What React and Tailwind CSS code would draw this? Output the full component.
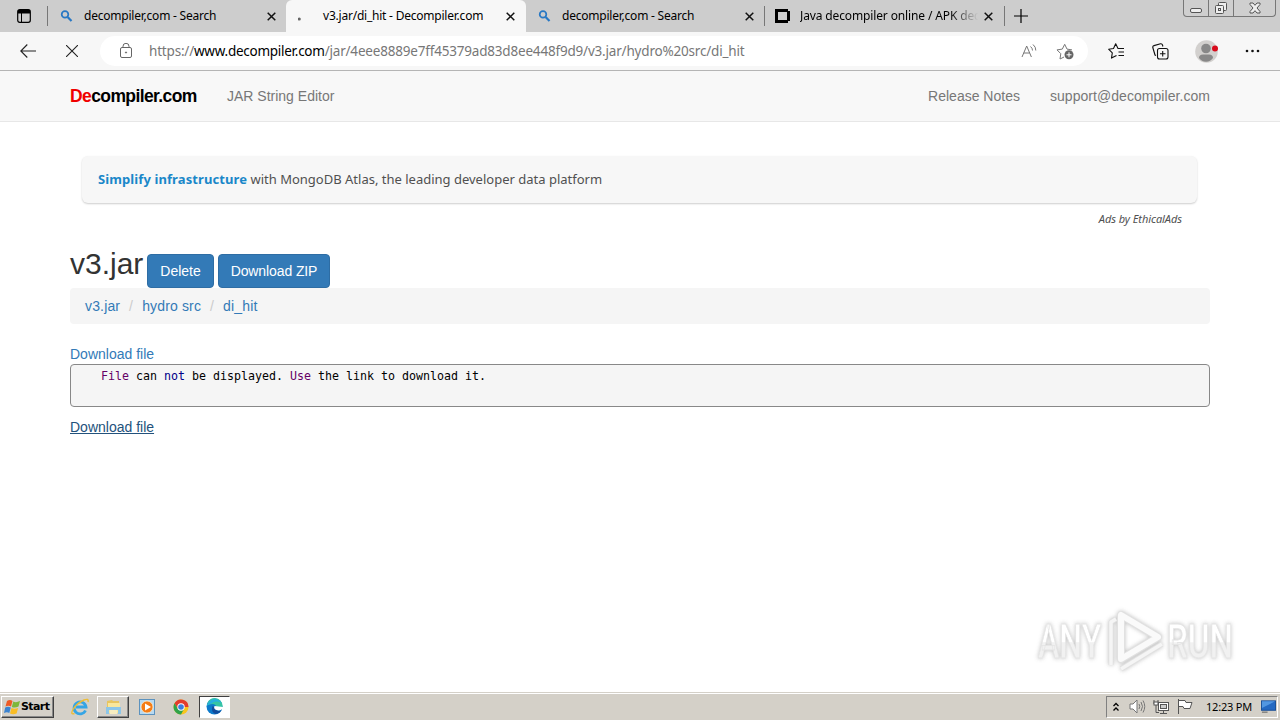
//App.jsx
import React from 'react'

const tabs = [
  { id: 1, title: 'decompiler,com - Search', icon: 'search', box: 'w-[238px] rounded-br bg-[#cdcdcd] pl-[11px] pr-[10px]' },
  { id: 2, title: 'v3.jar/di_hit - Decompiler.com', icon: 'loading', box: 'w-[240px] rounded-t-md bg-[#f7f7f7] pl-[12px] pr-[11px]' },
  { id: 3, title: 'decompiler,com - Search', icon: 'search', box: 'w-[238px] rounded-bl bg-[#cdcdcd] pl-[11px] pr-[10px]' },
  { id: 4, title: 'Java decompiler online / APK dec', icon: 'square', box: 'w-[239px] bg-[#cdcdcd] pl-[10px] pr-[11px]' },
]

function TabIcon({ name }) {
  if (name === 'search') {
    return (
      <svg className="h-4 w-4 shrink-0" viewBox="0 0 16 16" fill="none" stroke="#2878c4" strokeWidth="1.7">
        <circle cx="6" cy="6.4" r="3.300" />
        <path d="M8.600 9 L12.500 13" strokeWidth="2.200" />
      </svg>
    )
  }
  if (name === 'loading') {
    return (
      <svg className="h-4 w-4 shrink-0" viewBox="0 0 16 16">
        <circle cx="1.3" cy="11" r="1.5" fill="#666" />
      </svg>
    )
  }
  return (
    <svg className="h-4 w-4 shrink-0" viewBox="0 0 16 16">
      <path d="M0 1h13v2h2v10h-2v2H0z M3 4v8h9V4z" fill="#000" fillRule="evenodd" />
    </svg>
  )
}

function CloseIcon() {
  return (
    <svg className="h-[9px] w-[9px] shrink-0" viewBox="0 0 9 9" stroke="#111" strokeWidth="1.5">
      <path d="M.7.7l7.6 7.6M8.3.7L.7 8.3" />
    </svg>
  )
}

function TabBar() {
  return (
    <div className="relative flex h-8 bg-[#cdcdcd] font-['Noto_Sans',sans-serif]">
      <div className="flex w-[47px] items-center pl-[17px]">
        <svg className="h-[14px] w-[14px]" viewBox="0 0 14 14">
          <rect x=".7" y=".7" width="12.6" height="12.6" rx="2" fill="none" stroke="#000" strokeWidth="1.2" />
          <path d="M1 1h12v3.5H1z" fill="#000" />
          <path d="M4.5 4v9" stroke="#000" />
        </svg>
      </div>
      <div className="mt-1.5 h-5 w-px bg-[#777]"></div>
      {tabs.map((tab) => (
        <div key={tab.id} className="flex">
          <div className={'flex h-8 items-center ' + tab.box}>
            <TabIcon name={tab.icon} />
            <div className={'ml-[9px] flex-1 text-[12px] whitespace-nowrap text-black ' +
                            (tab.id === 4 ? 'tracking-[-0.13px] [mask-image:linear-gradient(to_right,#000_150px,transparent_178px)]' : 'tracking-[-0.22px]')}>
              {tab.title}
            </div>
            <CloseIcon />
          </div>
          {tab.id > 2 && <div className="mt-1.5 h-5 w-px bg-[#777]"></div>}
        </div>
      ))}
      <svg className="mt-[9px] ml-[9px] h-[14px] w-[14px]" viewBox="0 0 14 14" stroke="#000" strokeWidth="1.2">
        <path d="M7 0v14M0 7h14" />
      </svg>

      {/* window buttons */}
      <div className="absolute top-0 right-[4px] flex h-[17px] rounded-b border border-t-0 border-[#777] bg-[#cfcfcf]">
        <div className="flex w-[25px] items-end justify-center border-r border-[#777] pb-[3px]">
          <div className="h-[5px] w-[12px] rounded-[2px] border border-[#555] bg-[#eee]"></div>
        </div>
        <div className="flex w-[25px] items-center justify-center border-r border-[#777]">
          <svg className="h-[14px] w-[14px]" viewBox="0 0 14 14" fill="#eee" stroke="#555">
            <rect x="4.5" y="1.5" width="8" height="8" rx="1" />
            <rect x="1.5" y="4.5" width="8" height="8" rx="1" />
            <rect x="4.5" y="7.5" width="2" height="2" />
          </svg>
        </div>
        <div className="flex w-[41px] items-center justify-center">
          <svg className="h-[12px] w-[12px]" viewBox="0 0 12 12" fill="#eee" stroke="#555">
            <path d="M1 1h3l2 2.3L8 1h3v1.5L8 6l3 3.5V11H8L6 8.7 4 11H1V9.500L4 6 1 2.500z" />
          </svg>
        </div>
      </div>
    </div>
  )
}

function AddressBar() {
  return (
    <div className="flex h-[39px] items-center border-b border-[#b5b5b5] bg-[#f7f7f7]">
      <svg className="ml-[20px] h-[14px] w-[16px]" viewBox="0 0 16 14" fill="none" stroke="#222" strokeWidth="1.1">
        <path d="M16 7H.8M7.300.5L.8 7l6.500 6.500" />
      </svg>
      <svg className="ml-[30px] h-[12px] w-[12px]" viewBox="0 0 12 12" stroke="#222" strokeWidth="1.1">
        <path d="M0 0l12 12M12 0L0 12" />
      </svg>
      <div className="ml-[22px] flex h-[30px] w-[988px] items-center rounded-full bg-white pl-[20px]">
        <svg className="h-[16px] w-[12px]" viewBox="0 0 12 16" fill="none" stroke="#666">
          <rect x=".5" y="4.500" width="11" height="10" rx="1.500" />
          <path d="M3 4.500V3.300a3 3 0 0 1 6 0v1.200" />
          <circle cx="6" cy="9.500" r=".6" fill="#666" />
        </svg>
        <div className="ml-[17px] w-[872px] text-[13.5px] whitespace-nowrap tracking-[-0.19px] text-[#777] font-['Noto_Sans',sans-serif]">
          https://<span className="tracking-[-0.26px] text-black">www.decompiler.com</span>/jar/4eee8889e7ff45379ad83d8ee448f9d9/v3.jar/hydro%20src/di_hit
        </div>
        <svg className="h-[16px] w-[17px]" viewBox="0 0 17 16" fill="none" stroke="#777">
          <path d="M1 14L5.700 3l4.700 11M2.700 10h6" />
          <path d="M9.500 3.500q2 1.500 2 4M12 1.500q3 2.500 2.800 6" />
        </svg>
        <svg className="ml-[18px] h-[18px] w-[18px]" viewBox="0 0 18 18" fill="none" stroke="#777">
          <path d="M8 15l-4 2 .8-5.300L1 7.900l5.300-.8L8.700 2.300 11 7.100l5 .8" strokeLinejoin="round" />
          <circle cx="13" cy="12.800" r="4.500" fill="#666" stroke="none" />
          <path d="M13 10.300v5M10.500 12.800h5" stroke="#fff" />
        </svg>
      </div>
      <svg className="ml-[20px] h-[16px] w-[17px]" viewBox="0 0 17 16" fill="none" stroke="#111" strokeWidth="1.1">
        <path d="M16 5.500h-6L7.700.8 5.500 5.500.6 6.200l3.700 3.700-.8 5.200 5-2.700M10.500 9H16M10.500 12.500H16" strokeLinejoin="round" />
      </svg>
      <svg className="ml-[27px] h-[17px] w-[17px]" viewBox="0 0 17 17" fill="none" stroke="#111" strokeWidth="1.1">
        <rect x="5.500" y="5.500" width="10.500" height="10.500" rx="2" />
        <path d="M10.700 8v5.500M8 10.700h5.500M4 12.500L3 12 .8 4.500Q.5 3 2 2.600L8.500.8Q10 .500 10.500 2l.4 1.500" />
      </svg>
      <svg className="ml-[26px] h-[23px] w-[24px]" viewBox="0 0 24 23">
        <circle cx="11.500" cy="11.500" r="11.300" fill="#d2d0ce" />
        <circle cx="11" cy="8.500" r="4.800" fill="#888" />
        <path d="M4 18q0-3.500 4-3.500h6q4 0 4 3.500-2.500 3.700-7 3.700T4 18z" fill="#888" />
        <circle cx="20" cy="8.500" r="3" fill="#d80b1c" />
      </svg>
      <svg className="ml-[26px] h-[4px] w-[16px]" viewBox="0 0 16 4" fill="#111">
        <circle cx="2" cy="2" r="1.300" />
        <circle cx="7.500" cy="2" r="1.300" />
        <circle cx="13" cy="2" r="1.300" />
      </svg>
    </div>
  )
}

function Navbar() {
  return (
    <div className="flex h-[51px] items-center border-b border-[#e7e7e7] bg-[#f8f8f8] px-[70px] text-[14px] text-[#777]">
      <div className="w-[127px] text-[17.5px] font-bold whitespace-nowrap tracking-[-0.6px] text-black">
        <span className="text-[#f00000]">De</span>compiler.com
      </div>
      <div className="ml-[30px]">JAR String Editor</div>
      <div className="ml-auto">Release Notes</div>
      <div className="ml-[30px] tracking-[0.05px]">support@decompiler.com</div>
    </div>
  )
}

// faded mark in the lower right corner
function Watermark() {
  return (
    <div className="absolute top-[608px] left-[1037px] opacity-90 drop-shadow-[0_0_2px_#bbb]">
      <svg className="h-[66px] w-[204px]" viewBox="0 0 204 66" fill="none">
        <defs>
          <linearGradient id="fade" x1="0" y1="0" x2="0" y2="1">
            <stop offset=".5" stopColor="#fff" />
            <stop offset=".52" stopColor="#f0f0f0" />
          </linearGradient>
        </defs>
        <g fontFamily="Roboto" fontWeight="500" fontSize="48" fill="url(#fade)" stroke="#e2e2e2" strokeWidth=".8">
          <text transform="translate(1 50) scale(.67 1)">ANY</text>
          <text transform="translate(130 50) scale(.69 1)">RUN</text>
        </g>
        <g strokeLinejoin="round">
          <path d="M84 7v44L121 29z" stroke="#dedede" strokeWidth="8" />
          <path d="M84 7v44L121 29z" stroke="#fafafa" strokeWidth="6" />
          <path d="M79 11l-5 3v43M84 61L125 36" stroke="#dedede" strokeWidth="5" />
          <path d="M79 11l-5 3v43M84 61L125 36" stroke="#f4f4f4" strokeWidth="3.500" />
        </g>
      </svg>
    </div>
  )
}

function StartButton() {
  return (
    <div className="flex h-[22px] w-[53px] items-center border border-t-white border-r-[#404040] border-b-[#404040] border-l-white pl-[2px] shadow-[inset_-1px_-1px_0_#888]">
      <svg className="h-[16px] w-[17px] shrink-0" viewBox="0 0 17 16">
        <path d="M3 2q3-2 5.500 0L7 7.500Q4.500 6 1.500 7.500z" fill="#ee5a24" />
        <path d="M9.300 2.500Q12 4 16 2l-1.500 5.500Q11 9.300 7.800 8z" fill="#7db73a" />
        <path d="M1.200 8.500Q4 7 6.800 8.500L5.300 14Q3 12.500 0 14z" fill="#3b83d0" />
        <path d="M7.500 9q3 1.500 6.600 0l-1.500 5.500Q9 16 6 14.500z" fill="#f9bd24" />
      </svg>
      <div className="pt-[2px] text-[11px] font-bold tracking-[-0.6px] text-black font-['DejaVu_Sans',sans-serif]">Start</div>
    </div>
  )
}

function Taskbar() {
  return (
    <div className="mt-auto flex h-[28px] items-center border-t border-[#d4d0c8] bg-[#d4d0c8] pl-px shadow-[inset_0_1px_0_#fff]">
      <StartButton />

      {/* internet explorer */}
      <svg className="ml-[17px] h-[18px] w-[18px]" viewBox="0 0 18 18" fill="none">
        <path d="M14.500 12.500A6 6 0 1 1 15 9H5" stroke="#35a5e5" strokeWidth="2.800" />
        <path d="M3.500 15.500Q-1 17 2 11.500 6 5 13 2q5-2 4 2" stroke="#edbd36" strokeWidth="1.400" />
      </svg>

      {/* explorer */}
      <div className="ml-[8px] flex h-[22px] w-[32px] items-center justify-center border border-t-white border-r-[#404040] border-b-[#404040] border-l-white shadow-[inset_-1px_-1px_0_#888]">
        <svg className="h-[16px] w-[17px]" viewBox="0 0 17 16">
          <path d="M2 2l5-1 1 1h6v12H2z" fill="#e8c55f" />
          <path d="M3 4h12v10H3z" fill="#f9e79b" />
          <path d="M1 8h15v7h-3v-4H4v4H1z" fill="#8cc6e8" />
          <path d="M5 11h7v4H5z" fill="#f7edc1" />
        </svg>
      </div>

      {/* media player */}
      <svg className="ml-[10px] h-[16px] w-[16px]" viewBox="0 0 16 16">
        <rect x=".5" y=".5" width="15" height="15" fill="#b7d9f1" stroke="#5c92be" />
        <circle cx="8" cy="8" r="6" fill="#f47c16" stroke="#fff3d8" strokeWidth=".7" />
        <path d="M6 4.500v7L12 8z" fill="#fff" />
      </svg>

      {/* chrome */}
      <svg className="ml-[18px] h-[16px] w-[16px]" viewBox="0 0 16 16">
        <circle cx="8" cy="8" r="7.500" fill="#f8c51c" />
        <path d="M8 8H15.500A7.500 7.500 0 0 0 1.500 4.300L5 10z" fill="#e33b2e" />
        <path d="M1.500 4.300A7.500 7.500 0 0 0 8 15.500L11 10 8 8 5 10z" fill="#2fa34a" />
        <circle cx="8" cy="8" r="3.700" fill="#fff" />
        <circle cx="8" cy="8" r="2.800" fill="#3a7de0" />
      </svg>

      {/* edge */}
      <div className="ml-[10px] flex h-[22px] w-[31px] items-center justify-center border border-t-[#404040] border-r-white border-b-white border-l-[#404040] bg-white">
        <svg className="h-[17px] w-[17px]" viewBox="0 0 17 17">
          <circle cx="8.500" cy="8.500" r="8" fill="#0d7acb" />
          <path d="M1 7.500A7.700 7.700 0 0 1 16.500 8q0 4-4 4-3 0-2-2.500Q10 6 6.500 6 3 6 1 7.500z" fill="#36c5a3" />
          <path d="M1 7.500Q3 2 8.500 1q5 .300 7 4-6-3-10 .5z" fill="#27afe0" />
          <path d="M6.500 8q-2 6 3 8 4-.5 6-3.500-6 1.500-6-2.500z" fill="#134c9b" />
          <path d="M8.500 8q-1.500 3.500 3 4.300 3 .500 4.500-1l.5 1.200H17V9z" fill="#fff" />
        </svg>
      </div>

      {/* tray */}
      <div className="mr-[2px] ml-auto flex h-[22px] w-[172px] items-center border border-t-[#808080] border-r-white border-b-white border-l-[#808080] pl-[6px]">
        <svg className="h-[10px] w-[6px]" viewBox="0 0 6 10" fill="none" stroke="#000" strokeWidth="1.300">
          <path d="M.5 4L3 1.500 5.500 4M.5 8.500L3 6l2.500 2.500" />
        </svg>
        <svg className="ml-[10px] h-[15px] w-[17px]" viewBox="0 0 17 15" fill="none" stroke="#777">
          <path d="M1 5h3l4-4v13l-4-4H1z" fill="#fff" />
          <path d="M10 5q1.500 2.500 0 5M12 3q3 4.500 0 9M14 1.500q3.500 6 0 12" />
        </svg>
        <svg className="ml-[7px] h-[15px] w-[16px]" viewBox="0 0 16 15" fill="#fff" stroke="#555">
          <rect x="5.500" y="3.500" width="10" height="8" />
          <rect x="7.500" y="5.500" width="6" height="4" fill="#ccc" />
          <path d="M7 14.500h7M10.500 12v2M1 1v4h4V1M3 5v8.500h3" fill="none" />
          <rect x="1" y="3" width="4" height="3" />
        </svg>
        <svg className="ml-[8px] h-[15px] w-[16px]" viewBox="0 0 16 15" fill="#fff" stroke="#555">
          <path d="M1.500 0v15M1.500 1.500H8l1 2h6l-2 6H7l-1-2H1.500z" />
        </svg>
        <div className="ml-[13px] w-[47px] pt-px text-[11px] whitespace-nowrap tracking-[-0.2px] text-black font-['Noto_Sans',sans-serif]">12:23 PM</div>
        <svg className="ml-[8px] h-[13px] w-[15px]" viewBox="0 0 16 13">
          <rect x=".5" y=".5" width="15" height="10" fill="#2469c2" stroke="#174c94" />
          <path d="M1 1h14L1 8z" fill="#5297e1" />
          <path d="M1 12.500h6" stroke="#555" />
        </svg>
      </div>
    </div>
  )
}

export default function App() {
  return (
    <div className="relative flex h-[720px] w-[1280px] flex-col overflow-hidden bg-white text-[14px] text-[#333] font-['Liberation_Sans',Arial,sans-serif]">
      <TabBar />
      <AddressBar />
      <Navbar />

      <div className="mx-[70px] pt-[34px]">
        {/* ad */}
        <div className="mx-3 font-['Noto_Sans',sans-serif]">
          <div className="mr-px flex h-[47px] items-center rounded-md bg-[#f7f7f7] px-4 text-[13px] whitespace-nowrap text-[#505050] shadow-[0_1px_2px_rgba(0,0,0,0.2)]">
            <div><span className="font-bold tracking-[0.1px] text-[#1a87c9]">Simplify infrastructure</span> with MongoDB Atlas, the leading developer data platform</div>
          </div>
          <div className="mt-[8px] mr-4 text-right text-[11px] leading-4 tracking-[-0.06px] text-[#505050] italic">Ads by EthicalAds</div>
        </div>

        <div className="mt-[27px] flex h-[34px]">
          <h1 className="-mt-[7px] w-[77px] text-[30px] leading-[33px]">v3.jar</h1>
          <button className="w-[67px] rounded border border-[#2e6da4] bg-[#337ab7] text-white">Delete</button>
          <button className="ml-1 w-[112px] rounded border border-[#2e6da4] bg-[#337ab7] tracking-[-0.1px] text-white">Download ZIP</button>
        </div>

        <div className="flex h-[36px] items-center rounded bg-[#f5f5f5] px-[15px] tracking-[0.15px] text-[#337ab7]">
          <a>v3.jar</a>
          <span className="w-[22px] text-center text-[#ccc]">/</span>
          <a>hydro src</a>
          <span className="w-[22px] text-center text-[#ccc]">/</span>
          <a>di_hit</a>
        </div>

        <a className="mt-5 block leading-5 text-[#337ab7]">Download file</a>
        <pre className="h-[43px] rounded border border-[#888] bg-[#f5f5f5] pt-[3px] pl-[30px] text-[11.63px] leading-4 text-black font-['DejaVu_Sans_Mono',monospace]">
          <span className="text-[#660066]">File</span> can <span className="text-[#000088]">not</span> be displayed. <span className="text-[#660066]">Use</span> the link to download it.
        </pre>
        <a className="mt-[10px] block leading-5 text-[#23527c] underline">Download file</a>
      </div>

      <Watermark />
      <Taskbar />
    </div>
  )
}
